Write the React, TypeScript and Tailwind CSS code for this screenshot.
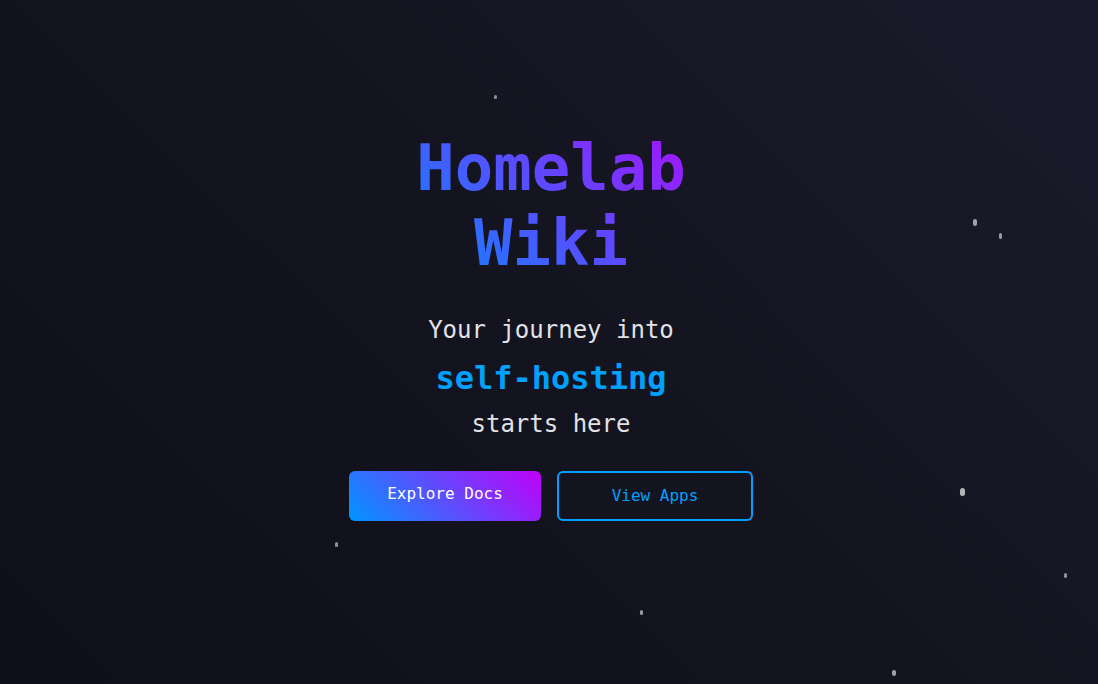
const stars = [
  'left-[494px] top-[95px] w-[3px] h-[4px] opacity-70',
  'left-[973px] top-[219px] w-[4px] h-[7px] opacity-80',
  'left-[999px] top-[233px] w-[3px] h-[6px] opacity-75',
  'left-[960px] top-[488px] w-[5px] h-[8px] opacity-90',
  'left-[335px] top-[542px] w-[3px] h-[5px] opacity-70',
  'left-[1064px] top-[573px] w-[3px] h-[5px] opacity-70',
  'left-[640px] top-[610px] w-[3px] h-[5px] opacity-75',
  'left-[892px] top-[670px] w-[4px] h-[6px] opacity-80',
];

export default function App() {
  return (
    <div className="relative w-full min-h-screen overflow-hidden bg-linear-45/srgb from-[#0f0f1a] via-[#141420] to-[#1a1a2b] font-['DejaVu_Sans_Mono',_monospace]">
      {/* twinkling stars */}
      {stars.map((cls, i) => (
        <span key={i} className={`absolute rounded-full bg-[#c4c4cc] blur-[0.4px] ${cls}`} />
      ))}

      <main className="relative z-10 min-h-screen flex flex-col items-center justify-center pb-8 pl-1 text-center">
        <h1 className="inline-block text-[64px] leading-[75px] font-bold bg-linear-45/srgb from-[#0a88ff] to-[#a414ff] bg-clip-text text-transparent">
          Homelab
          <br />
          Wiki
        </h1>

        <p className="mt-[31px] text-2xl leading-9 text-[#e2e2e6]">Your journey into</p>
        <p className="mt-2 text-[32px] leading-[44px] font-bold text-[#00a0ff]">self-hosting</p>
        <p className="mt-[6px] text-2xl leading-9 text-[#e2e2e6]">starts here</p>

        <div className="mt-[29px] flex gap-4">
          <button className="w-[192px] h-[50px] pb-1 rounded-md bg-linear-45/srgb from-[#0096ff] to-[#c000fa] text-white text-base">
            Explore Docs
          </button>
          <button className="w-[196px] h-[50px] rounded-md border-2 border-[#00a0ff] text-[#00a0ff] text-base">
            View Apps
          </button>
        </div>
      </main>
    </div>
  );
}
